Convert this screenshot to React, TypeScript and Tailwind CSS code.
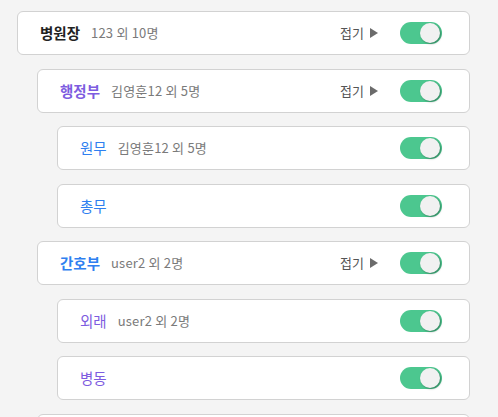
type Node = {
  name: string;
  sub?: string;
  color: string;
  weight: string;
  indent: string;
  fold?: boolean;
};

const rows: Node[] = [
  { name: "병원장", sub: "123 외 10명", color: "text-[#222222]", weight: "font-bold", indent: "ml-0", fold: true },
  { name: "행정부", sub: "김영훈12 외 5명", color: "text-[#7d5ce0]", weight: "font-semibold", indent: "ml-[20px]", fold: true },
  { name: "원무", sub: "김영훈12 외 5명", color: "text-[#2f7ff0]", weight: "font-normal", indent: "ml-[40px]" },
  { name: "총무", color: "text-[#2f7ff0]", weight: "font-normal", indent: "ml-[40px]" },
  { name: "간호부", sub: "user2 외 2명", color: "text-[#2f7ff0]", weight: "font-semibold", indent: "ml-[20px]", fold: true },
  { name: "외래", sub: "user2 외 2명", color: "text-[#7d5ce0]", weight: "font-normal", indent: "ml-[40px]" },
  { name: "병동", color: "text-[#7d5ce0]", weight: "font-normal", indent: "ml-[40px]" },
  { name: "", color: "", weight: "", indent: "ml-[20px]" },
];

const Toggle = () => (
  <div className="w-[42px] h-[22px] rounded-full bg-[#4cc78f] flex items-center justify-end pr-[2px]">
    <div className="w-[20px] h-[20px] rounded-full bg-[#f1f1f1] shadow-[1px_1px_2px_rgba(0,0,0,0.35)]" />
  </div>
);

const Row = (props: { node: Node }) => {
  const { node } = props;
  return (
    <div
      className={`${node.indent} h-[44px] shrink-0 bg-white border border-[#d2d2d2] rounded-[6px] flex items-center pl-[22px] pr-[27px]`}
    >
      <span className={`text-[14.5px] ${node.color} ${node.weight}`}>{node.name}</span>
      {node.sub && (
        <span className="ml-[11px] text-[13px] text-[#7a7a7a] tracking-[0.2px]">{node.sub}</span>
      )}
      <div className="flex-1" />
      {node.fold && (
        <div className="flex items-center gap-[6px] mr-[22px] text-[13px] text-[#555555]">
          <span>접기</span>
          <svg width="8" height="10" viewBox="0 0 8 10">
            <path d="M0 0 L8 5 L0 10 Z" fill="#6b6b6b" />
          </svg>
        </div>
      )}
      {node.name && <Toggle />}
    </div>
  );
};

const App = () => {
  return (
    <div
      className="w-[498px] h-[417px] overflow-hidden bg-[#f4f4f4] pt-[11px] pl-[17px] pr-[28px] flex flex-col gap-[13.5px]"
      style={{ fontFamily: '"Noto Sans CJK KR", "Noto Sans", sans-serif' }}
    >
      {rows.map((r, i) => (
        <Row key={i} node={r} />
      ))}
    </div>
  );
};

export default App;
